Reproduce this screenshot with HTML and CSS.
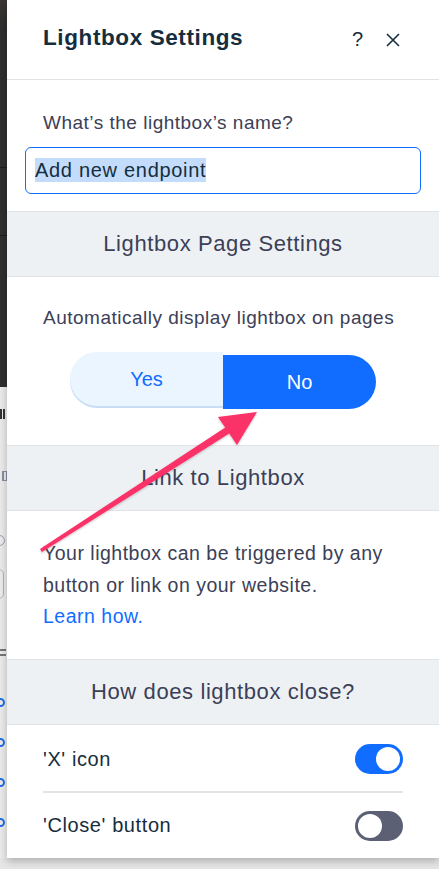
FILE: index.html
```html
<!DOCTYPE html>
<html>
<head>
<meta charset="utf-8">
<link rel="stylesheet" href="styles.css">
</head>
<body>
<div class="screen">
  <div class="side">
    <div class="side-dark">
      <div class="side-photo"></div>
      <div class="side-line l1"></div>
      <div class="side-line l2"></div>
    </div>
    <div class="side-light">
      <div class="mark bars"></div>
      <div class="mark dee"></div>
      <div class="mark ring"></div>
      <div class="mark brace"></div>
      <div class="mark eq"></div>
      <div class="mark dot d1"></div>
      <div class="mark dot d2"></div>
      <div class="mark dot d3"></div>
      <div class="mark dot d4"></div>
    </div>
  </div>
  <div class="panel">
    <header class="head">
      <h1 class="title">Lightbox Settings</h1>
      <div class="head-actions">
        <span class="help">?</span>
        <svg class="close" width="16" height="16" viewBox="0 0 16 16"><path d="M2 2 L14 14 M14 2 L2 14" stroke="#162d3d" stroke-width="1.6" fill="none"/></svg>
      </div>
    </header>
    <section class="name">
      <p class="label">What’s the lightbox’s name?</p>
      <div class="input"><span class="sel">Add new endpoint</span></div>
    </section>
    <div class="sect">Lightbox Page Settings</div>
    <section class="auto">
      <p class="label">Automatically display lightbox on pages</p>
      <div class="seg">
        <div class="seg-yes">Yes</div>
        <div class="seg-no">No</div>
      </div>
    </section>
    <div class="sect">Link to Lightbox</div>
    <section class="link">
      <p class="para">Your lightbox can be triggered by any button or link on your website.</p>
      <a class="learn">Learn how.</a>
    </section>
    <div class="sect">How does lightbox close?</div>
    <section class="rows">
      <div class="row">
        <span class="row-text">'X' icon</span>
        <span class="switch on"><span class="knob"></span></span>
      </div>
      <div class="divider"></div>
      <div class="row">
        <span class="row-text">'Close' button</span>
        <span class="switch off"><span class="knob"></span></span>
      </div>
    </section>
  </div>
</div>
<div class="below"></div>
<svg class="arrow" width="439" height="869" viewBox="0 0 439 869">
  <defs>
    <filter id="sh" x="-10%" y="-10%" width="120%" height="120%">
      <feDropShadow dx="0" dy="1" stdDeviation="1" flood-color="#000" flood-opacity="0.25"/>
    </filter>
  </defs>
  <g filter="url(#sh)" fill="#fb3067">
    <polygon points="40,549 42,552 230,433 226,427"/>
    <polygon points="257,412 218,417 237,445"/>
  </g>
</svg>
</body>
</html>
```
FILE: styles.css
```css
* { box-sizing: border-box; }
html, body { margin: 0; padding: 0; }
body {
  width: 439px;
  height: 869px;
  overflow: hidden;
  position: relative;
  background: #e4e4e4;
  font-family: "Liberation Sans", Arial, sans-serif;
  color: #3b4057;
}
.screen {
  display: flex;
  height: 858px;
}
.side {
  width: 7px;
  display: flex;
  flex-direction: column;
  overflow: hidden;
}
.side-dark {
  height: 387px;
  background: #2f2f2f;
  position: relative;
}
.side-photo {
  height: 30px;
  background: linear-gradient(#3a3733, #2f2f2f);
}
.side-line { position: absolute; left: 0; width: 7px; height: 1px; background: #1c1c1c; }
.l1 { top: 167px; }
.l2 { top: 235px; }
.side-light {
  flex: 1;
  background: #ebebeb;
  position: relative;
}
.mark { position: absolute; }
.bars { top: 22px; left: 0; width: 5px; height: 10px; border-left: 2px solid #333; border-right: 2px solid #333; }
.dee { top: 84px; left: 2px; width: 5px; height: 10px; border: 1px solid #8a8ea0; border-left-width: 2px; }
.ring { top: 148px; left: -6px; width: 11px; height: 11px; border: 1px solid #9aa0b0; border-radius: 50%; }
.brace { top: 182px; left: -6px; width: 10px; height: 30px; border: 1px solid #b0b4c0; border-radius: 5px; }
.eq { top: 262px; left: 0; width: 6px; height: 7px; border-top: 2px solid #777; border-bottom: 2px solid #777; }
.dot { left: -4px; width: 9px; height: 9px; border: 2px solid #1f6fe8; border-radius: 50%; }
.d1 { top: 311px; }
.d2 { top: 351px; }
.d3 { top: 391px; }
.d4 { top: 431px; }

.panel {
  width: 432px;
  background: #fff;
  box-shadow: 0 3px 8px rgba(0,0,0,0.25);
  display: flex;
  flex-direction: column;
  position: relative;
  z-index: 1;
}
.panel > * { flex-shrink: 0; }
.head {
  height: 80px;
  border-bottom: 1px solid #e2e2e2;
  display: flex;
  align-items: center;
  justify-content: space-between;
  padding: 0 38px 0 36px;
}
.title {
  margin: 0;
  font-size: 22.5px;
  font-weight: bold;
  color: #162d3d;
  letter-spacing: 0.6px;
  padding-bottom: 3px;
}
.head-actions {
  display: flex;
  align-items: center;
  gap: 22px;
}
.help {
  font-size: 20px;
  color: #162d3d;
  font-weight: normal;
}
.close { display: block; }

.label {
  margin: 0;
  font-size: 19px;
  letter-spacing: 0.5px;
  color: #3b4057;
  line-height: 22px;
}
.name {
  height: 131px;
  padding: 32px 0 0 18px;
}
.name .label { padding-left: 18px; }
.input {
  margin-top: 13px;
  width: 396px;
  height: 47px;
  border: 1px solid #116dff;
  border-radius: 6px;
  padding: 10px 0 0 9px;
  font-size: 20px;
  letter-spacing: 0.7px;
  color: #162d3d;
}
.sel { background: #c3dcfb; line-height: 24px; display: inline-block; }

.sect {
  height: 66px;
  background: #eef1f4;
  border-top: 1px solid #e1e3e6;
  border-bottom: 1px solid #e1e3e6;
  display: flex;
  align-items: center;
  justify-content: center;
  font-size: 22px;
  letter-spacing: 0.6px;
  color: #3b4057;
}
.auto {
  height: 168px;
  padding: 30px 0 0 36px;
}
.seg {
  margin: 26px 0 0 27px;
  width: 306px;
  height: 54px;
  display: flex;
}
.seg-yes {
  width: 153px;
  margin-top: -3px;
  height: 54px;
  background: #eaf5ff;
  border-radius: 27px 0 0 27px;
  box-shadow: 0 2px 0 #c9def5;
  color: #116dff;
  font-size: 20px;
  display: flex;
  align-items: center;
  justify-content: center;
}
.seg-no {
  width: 153px;
  height: 54px;
  background: #116dff;
  border-radius: 0 27px 27px 0;
  color: #fff;
  font-size: 20px;
  display: flex;
  align-items: center;
  justify-content: center;
}
.link {
  height: 148px;
  padding: 26px 40px 0 36px;
}
.para {
  margin: 0;
  font-size: 19.5px;
  letter-spacing: 0.5px;
  line-height: 32px;
  color: #3b4057;
}
.learn {
  display: block;
  font-size: 19.5px;
  letter-spacing: 0.5px;
  line-height: 31px;
  color: #116dff;
}
.rows {
  flex: 1 0 auto;
  padding: 0 36px 0 36px;
  display: flex;
  flex-direction: column;
}
.row {
  flex: 1;
  display: flex;
  align-items: center;
  justify-content: space-between;
}
.row:first-child { flex: 0 0 66px; padding-top: 2px; }
.row-text {
  font-size: 20px;
  letter-spacing: 0.6px;
  color: #162d3d;
}
.divider { height: 2px; background: #e3e3e3; }
.switch {
  width: 48px;
  height: 30px;
  border-radius: 15px;
  position: relative;
  display: block;
}
.switch.on { background: #116dff; }
.switch.off { background: #5b6074; }
.knob {
  position: absolute;
  top: 3px;
  width: 24px;
  height: 24px;
  border-radius: 50%;
  background: #fff;
}
.on .knob { right: 3px; }
.off .knob { left: 3px; }
.below {
  height: 11px;
  background: #e6e6e6;
}
.arrow {
  position: absolute;
  top: 0;
  left: 0;
  z-index: 5;
  pointer-events: none;
}
```
